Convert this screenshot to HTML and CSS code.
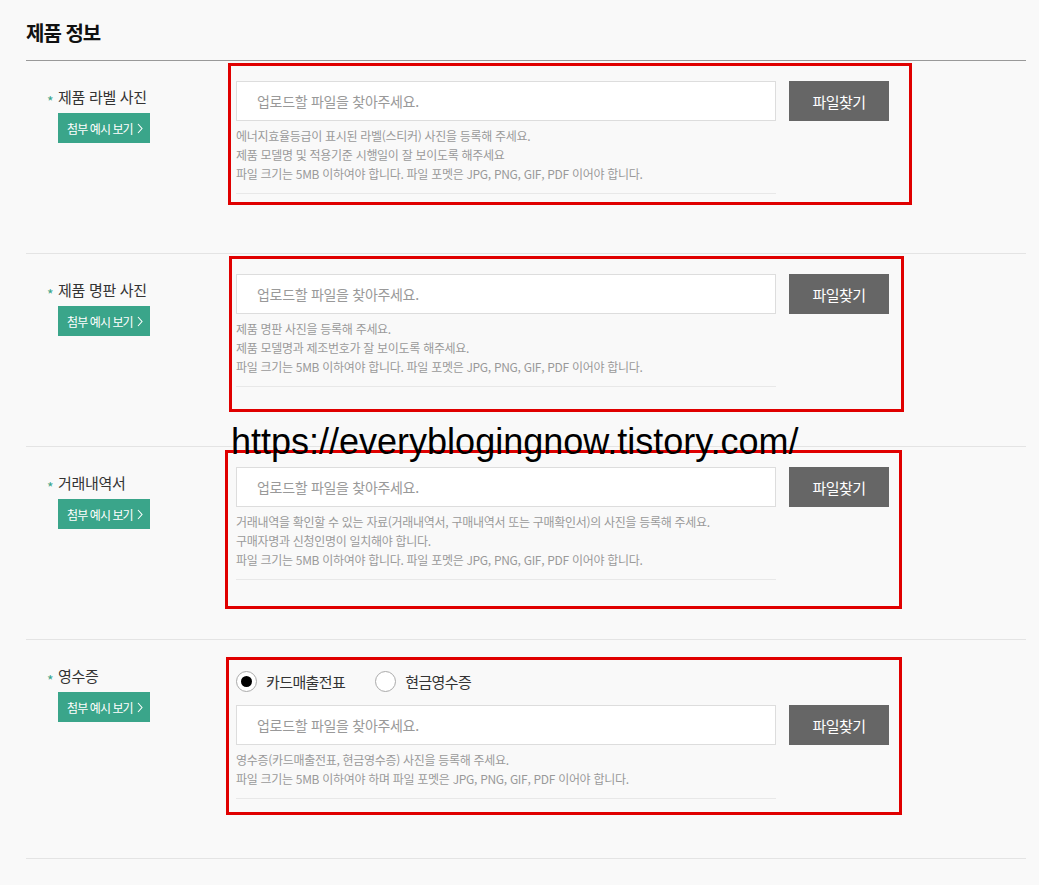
FILE: index.html
```html
<!DOCTYPE html>
<html lang="ko">
<head>
<meta charset="utf-8">
<title>제품 정보</title>
<link rel="stylesheet" href="styles.css">
</head>
<body>
<div class="page">
  <h2 class="title">제품 정보</h2>

  <section class="row">
    <div class="label-col">
      <div class="label"><span class="star">*</span>제품 라벨 사진</div>
      <a class="example-btn">첨부 예시 보기 <svg class="chev" viewBox="0 0 6 11" width="6" height="11"><path d="M1 1 L5 5.5 L1 10" fill="none" stroke="#fff" stroke-width="1.1"/></svg></a>
    </div>
    <div class="field-col">
      <div class="file-row">
        <div class="file-input">업로드할 파일을 찾아주세요.</div>
        <button class="file-btn">파일찾기</button>
      </div>
      <div class="help">
        <p>에너지효율등급이 표시된 라벨(스티커) 사진을 등록해 주세요.</p>
        <p>제품 모델명 및 적용기준 시행일이 잘 보이도록 해주세요</p>
        <p>파일 크기는 5MB 이하여야 합니다. 파일 포멧은 JPG, PNG, GIF, PDF 이어야 합니다.</p>
      </div>
    </div>
  </section>

  <section class="row">
    <div class="label-col">
      <div class="label"><span class="star">*</span>제품 명판 사진</div>
      <a class="example-btn">첨부 예시 보기 <svg class="chev" viewBox="0 0 6 11" width="6" height="11"><path d="M1 1 L5 5.5 L1 10" fill="none" stroke="#fff" stroke-width="1.1"/></svg></a>
    </div>
    <div class="field-col">
      <div class="file-row">
        <div class="file-input">업로드할 파일을 찾아주세요.</div>
        <button class="file-btn">파일찾기</button>
      </div>
      <div class="help">
        <p>제품 명판 사진을 등록해 주세요.</p>
        <p>제품 모델명과 제조번호가 잘 보이도록 해주세요.</p>
        <p>파일 크기는 5MB 이하여야 합니다. 파일 포멧은 JPG, PNG, GIF, PDF 이어야 합니다.</p>
      </div>
    </div>
  </section>

  <section class="row">
    <div class="label-col">
      <div class="label"><span class="star">*</span>거래내역서</div>
      <a class="example-btn">첨부 예시 보기 <svg class="chev" viewBox="0 0 6 11" width="6" height="11"><path d="M1 1 L5 5.5 L1 10" fill="none" stroke="#fff" stroke-width="1.1"/></svg></a>
    </div>
    <div class="field-col">
      <div class="file-row">
        <div class="file-input">업로드할 파일을 찾아주세요.</div>
        <button class="file-btn">파일찾기</button>
      </div>
      <div class="help">
        <p>거래내역을 확인할 수 있는 자료(거래내역서, 구매내역서 또는 구매확인서)의 사진을 등록해 주세요.</p>
        <p>구매자명과 신청인명이 일치해야 합니다.</p>
        <p>파일 크기는 5MB 이하여야 합니다. 파일 포멧은 JPG, PNG, GIF, PDF 이어야 합니다.</p>
      </div>
    </div>
  </section>

  <section class="row">
    <div class="label-col">
      <div class="label"><span class="star">*</span>영수증</div>
      <a class="example-btn">첨부 예시 보기 <svg class="chev" viewBox="0 0 6 11" width="6" height="11"><path d="M1 1 L5 5.5 L1 10" fill="none" stroke="#fff" stroke-width="1.1"/></svg></a>
    </div>
    <div class="field-col">
      <div class="radio-row">
        <label class="radio"><span class="radio-dot checked"></span>카드매출전표</label>
        <label class="radio"><span class="radio-dot"></span>현금영수증</label>
      </div>
      <div class="file-row">
        <div class="file-input">업로드할 파일을 찾아주세요.</div>
        <button class="file-btn">파일찾기</button>
      </div>
      <div class="help">
        <p>영수증(카드매출전표, 현금영수증) 사진을 등록해 주세요.</p>
        <p>파일 크기는 5MB 이하여야 하며 파일 포멧은 JPG, PNG, GIF, PDF 이어야 합니다.</p>
      </div>
    </div>
  </section>

  <div class="mark box1"></div>
  <div class="mark box2"></div>
  <div class="mark box3"></div>
  <div class="mark box4"></div>
  <div class="watermark">https://everyblogingnow.tistory.com/</div>
</div>
</body>
</html>
```

FILE: styles.css
```css
html, body {
  margin: 0;
  padding: 0;
  background: #f9f9f9;
}
body {
  font-family: "Noto Sans CJK KR", "Noto Sans", sans-serif;
  color: #333;
}
.page {
  position: relative;
  width: 1000px;
  margin-left: 26px;
  padding-bottom: 28px;
}
.title {
  margin: 0;
  padding-top: 20px;
  height: 61px;
  box-sizing: border-box;
  font-size: 20px;
  line-height: 26px;
  font-weight: 700;
  letter-spacing: -1px;
  color: #111;
  border-bottom: 1px solid #999;
}
.row {
  display: grid;
  grid-template-columns: 210px 1fr;
  padding: 20px 0 59px;
  border-bottom: 1px solid #e4e4e4;
}
.label-col {
  padding-left: 21px;
}
.label {
  margin-top: 6px;
  height: 20px;
  line-height: 20px;
  font-size: 15px;
  letter-spacing: -0.3px;
  color: #333;
  display: flex;
  align-items: center;
}
.star {
  color: #3aa58a;
  font-size: 14px;
  width: 11px;
  margin-top: 7px;
}
.example-btn {
  display: inline-flex;
  align-items: center;
  gap: 4px;
  margin: 6px 0 0 11px;
  height: 30px;
  width: 92px;
  box-sizing: border-box;
  padding-left: 9px;
  background: #3aa58a;
  color: #fff;
  font-size: 12px;
  letter-spacing: -0.9px;
}
.chev {
  display: block;
}
.field-col {
  display: flex;
  flex-direction: column;
}
.file-row {
  display: flex;
  gap: 13px;
}
.file-input {
  width: 540px;
  height: 40px;
  box-sizing: border-box;
  background: #fff;
  border: 1px solid #ddd;
  padding-left: 20px;
  line-height: 38px;
  font-size: 14px;
  color: #999;
  letter-spacing: -0.3px;
}
.file-btn {
  width: 100px;
  height: 40px;
  border: 0;
  padding: 0;
  background: #666;
  color: #fff;
  font-family: inherit;
  font-size: 15px;
  letter-spacing: -0.5px;
}
.help {
  width: 540px;
  margin-top: 5px;
  padding-bottom: 10px;
  border-bottom: 1px solid #e8e8e8;
}
.help p {
  margin: 0;
  font-size: 12px;
  line-height: 19px;
  color: #999;
  letter-spacing: -0.3px;
}
.radio-row {
  display: flex;
  align-items: center;
  gap: 30px;
  height: 42px;
  margin-bottom: 3px;
}
.radio {
  display: flex;
  align-items: center;
  gap: 9px;
  font-size: 15px;
  letter-spacing: -0.6px;
  color: #333;
}
.radio-dot {
  width: 21px;
  height: 21px;
  box-sizing: border-box;
  border: 1px solid #aaa;
  border-radius: 50%;
  background: #fff;
  display: flex;
  align-items: center;
  justify-content: center;
}
.radio-dot.checked::after {
  content: "";
  width: 11px;
  height: 11px;
  border-radius: 50%;
  background: #000;
}
.mark {
  position: absolute;
  border: 3px solid #e00000;
  box-sizing: border-box;
}
.box1 { left: 202px; top: 63px; width: 684px; height: 142px; }
.box2 { left: 203px; top: 256px; width: 675px; height: 156px; }
.box3 { left: 199px; top: 450px; width: 677px; height: 159px; }
.box4 { left: 200px; top: 657px; width: 676px; height: 158px; }
.watermark {
  position: absolute;
  left: 205px;
  top: 420px;
  font-family: "Liberation Sans", Arial, sans-serif;
  font-size: 36px;
  line-height: 44px;
  color: #000;
  white-space: nowrap;
}
```
